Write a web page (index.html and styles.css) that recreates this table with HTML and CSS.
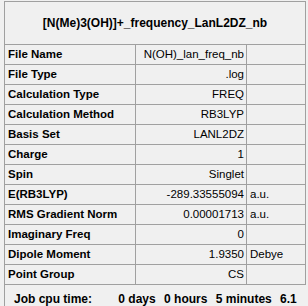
FILE: index.html
```html
<!DOCTYPE html>
<html lang="en">
<head>
    <meta charset="UTF-8">
    <meta name="viewport" content="width=device-width, initial-scale=1.0">
    <title>Job Summary</title>
    <link rel="stylesheet" href="styles.css">
</head>
<body>
    <div class="summary">
        <div class="summary-main">
            <div class="title">[N(Me)3(OH)]+_frequency_LanL2DZ_nb</div>
            <div class="props">
                <div class="key">File Name</div><div class="val">N(OH)_lan_freq_nb</div><div class="unit"></div>
                <div class="key">File Type</div><div class="val">.log</div><div class="unit"></div>
                <div class="key">Calculation Type</div><div class="val">FREQ</div><div class="unit"></div>
                <div class="key">Calculation Method</div><div class="val">RB3LYP</div><div class="unit"></div>
                <div class="key">Basis Set</div><div class="val">LANL2DZ</div><div class="unit"></div>
                <div class="key">Charge</div><div class="val">1</div><div class="unit"></div>
                <div class="key">Spin</div><div class="val">Singlet</div><div class="unit"></div>
                <div class="key">E(RB3LYP)</div><div class="val">-289.33555094</div><div class="unit">a.u.</div>
                <div class="key">RMS Gradient Norm</div><div class="val">0.00001713</div><div class="unit">a.u.</div>
                <div class="key">Imaginary Freq</div><div class="val">0</div><div class="unit"></div>
                <div class="key">Dipole Moment</div><div class="val">1.9350</div><div class="unit">Debye</div>
                <div class="key">Point Group</div><div class="val">CS</div><div class="unit"></div>
            </div>
        </div>
        <div class="cpu">
            <span class="cpu-label">Job cpu time:</span>
            <span class="cpu-part first">0 days</span>
            <span class="cpu-part">0 hours</span>
            <span class="cpu-part">5 minutes</span>
            <span class="cpu-part">6.1</span>
        </div>
    </div>
</body>
</html>
```

FILE: styles.css
```css
body {
    margin: 0;
    background-color: #f0f0f0;
    font-family: "Liberation Sans", Arial, sans-serif;
    color: #000;
    overflow: hidden;
}

.summary {
    margin: 1px 0 0 4px;
    width: 302px;
    height: 305px;
    border-left: 1px solid #a0a0a0;
    box-sizing: border-box;
}

.summary-main {
    border-top: 1px solid #a0a0a0;
    border-right: 1px solid #a0a0a0;
}

.title {
    height: 42px;
    display: flex;
    align-items: center;
    justify-content: center;
    font-size: 12px;
    font-weight: bold;
}

/* property grid: label / value / unit */
.props {
    display: grid;
    grid-template-columns: 131px 111px 1fr;
    border-top: 1px solid #a0a0a0;
}

.props > div {
    height: 20px;
    box-sizing: border-box;
    border-bottom: 1px solid #a0a0a0;
    font-size: 11.5px;
    line-height: 19px;
    white-space: nowrap;
    overflow: hidden;
}

.key {
    border-right: 1px solid #a0a0a0;
    padding-left: 3px;
    font-weight: bold;
}

.val {
    border-right: 1px solid #a0a0a0;
    padding-right: 2px;
    text-align: right;
}

.unit {
    padding-left: 3px;
}

.cpu {
    padding: 7px 0 0 9px;
    font-size: 12px;
    font-weight: bold;
    white-space: nowrap;
}

.cpu-part {
    margin-left: 5px;
}

.cpu-part.first {
    margin-left: 23px;
}
```
